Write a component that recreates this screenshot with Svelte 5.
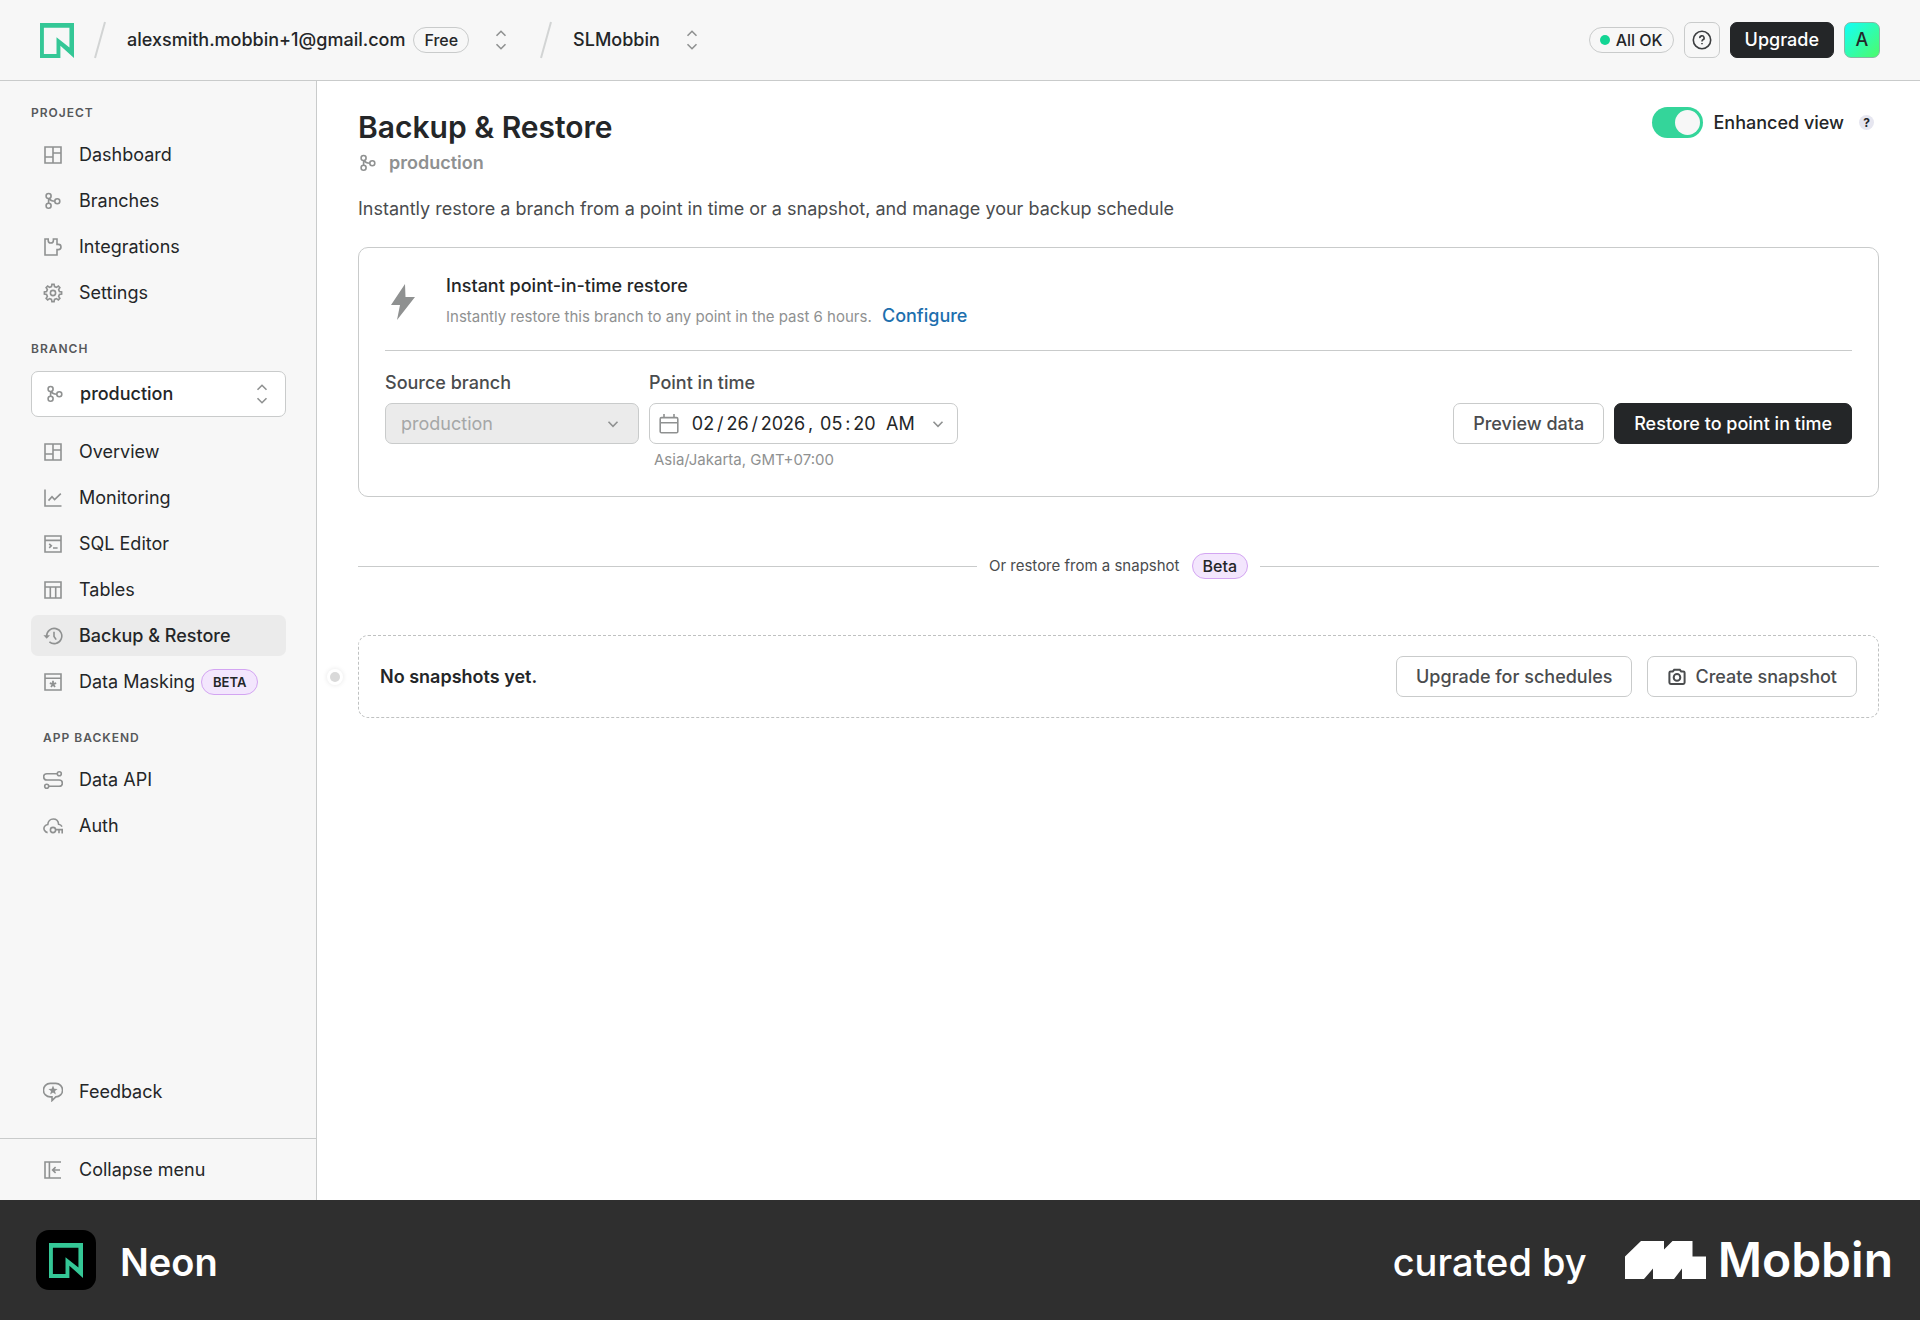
<script lang="ts">
	type NavItem = { label: string; icon: string; active?: boolean; badge?: string };

	const projectNav: NavItem[] = [
		{ label: 'Dashboard', icon: 'dashboard' },
		{ label: 'Branches', icon: 'branch' },
		{ label: 'Integrations', icon: 'puzzle' },
		{ label: 'Settings', icon: 'gear' }
	];

	const branchNav: NavItem[] = [
		{ label: 'Overview', icon: 'dashboard' },
		{ label: 'Monitoring', icon: 'chart' },
		{ label: 'SQL Editor', icon: 'terminal' },
		{ label: 'Tables', icon: 'table' },
		{ label: 'Backup & Restore', icon: 'history', active: true },
		{ label: 'Data Masking', icon: 'mask', badge: 'BETA' }
	];

	const backendNav: NavItem[] = [
		{ label: 'Data API', icon: 'api' },
		{ label: 'Auth', icon: 'auth' }
	];

	let enhanced = $state(true);
	let branch = $state('production');
	let date = $state({ month: '02', day: '26', year: '2026', hour: '05', minute: '20', period: 'AM' });

	// cog outline, one flat-topped tooth every 45 degrees
	function cog(teeth: number, outer: number, inner: number) {
		const points: string[] = [];
		const step = (Math.PI * 2) / teeth;
		for (let i = 0; i < teeth; i++) {
			const mid = i * step - Math.PI / 2;
			for (const [offset, r] of [
				[-0.3, inner],
				[-0.16, outer],
				[0.16, outer],
				[0.3, inner]
			]) {
				const a = mid + offset * step;
				points.push(`${(10 + r * Math.cos(a)).toFixed(2)} ${(10 + r * Math.sin(a)).toFixed(2)}`);
			}
		}
		return `M${points.join('L')}Z`;
	}

	const cogPath = cog(8, 8.7, 6.6);
</script>

<svelte:head>
	<title>Backup & Restore | Neon</title>
</svelte:head>

{#snippet icon(name: string)}
	<svg class="icon" viewBox="0 0 20 20" aria-hidden="true">
		{#if name === 'dashboard'}
			<path d="M2 2H18V18H2ZM10 2V18M2 12H10M10 8H18" />
		{:else if name === 'branch'}
			<circle cx="5.6" cy="5" r="2.5" />
			<circle cx="5.6" cy="14.8" r="2.5" />
			<circle cx="14.3" cy="10.2" r="2.5" />
			<path d="M5.6 7.5V12.3M6.4 7.4C7.1 9.3 8.8 10.2 11.8 10.2" />
		{:else if name === 'puzzle'}
			<path d="M2 2H5.2V3.4a2.6 2.6 0 0 0 5.2 0V2H14V7.4H15.4a2.6 2.6 0 0 1 0 5.2H14V18H2Z" />
		{:else if name === 'gear'}
			<path d={cogPath} />
			<circle cx="10" cy="10" r="2.6" />
		{:else if name === 'chart'}
			<path d="M2 1.5V18H18.5M5.5 12.6L9 8.8L11.6 11.6L17.8 5.6" />
		{:else if name === 'terminal'}
			<path d="M2 2H18V18H2ZM2 6.4H18M6.2 9.8L8.3 11.8L6.2 13.8M10 14H14.6" />
		{:else if name === 'table'}
			<path d="M2 2H18V18H2ZM2 7H18M7.3 7V18M12.7 7V18" />
		{:else if name === 'history'}
			<path d="M3.6 10A7.6 7.6 0 1 1 6.4 15.9M11 5.8V10.4L13.2 13.6" />
			<path class="solid" d="M0.4 9.2H7L3.7 12.8Z" />
		{:else if name === 'mask'}
			<path d="M2 2H18V18H2ZM2 6.2H18" />
			<path class="thick" d="M10 8.8V12.2M10 12.2L6.8 11.2M10 12.2L13.2 11.2M10 12.2L8 15M10 12.2L12 15" />
		{:else if name === 'api'}
			<circle cx="16.3" cy="3.7" r="2" />
			<circle cx="3.7" cy="16.3" r="2" />
			<path d="M14.3 3.7H3.8a3.15 3.15 0 0 0 0 6.3H16.2a3.15 3.15 0 0 1 0 6.3H5.7" />
		{:else if name === 'auth'}
			<path d="M4.6 16.6C1.6 16 0 12.8 1.6 10.4C2.4 9.2 3.6 8.6 4.8 8.5C5 5.2 7.3 3 10.2 3C13.2 3 15.3 5.2 15.6 8.2C17.2 8.4 18.3 9.2 19 10.6" />
			<circle cx="10" cy="14" r="2.6" />
			<path d="M12.6 13.6H19.2V17.6M16 13.6V17.2" />
		{:else if name === 'feedback'}
			<path d="M7.2 1.4H12.8A6.7 6.7 0 0 1 12.8 14.9L9 18.6V14.9H7.2A6.7 6.7 0 0 1 7.2 1.4Z" />
			<path class="solid" d="M10 3.6L11.3 6.8L14.6 7L12 9.1L12.8 12.4L10 10.6L7.2 12.4L8 9.1L5.4 7L8.7 6.8Z" />
		{:else if name === 'collapse'}
			<path d="M18 2H2V18H18M6.4 2V18M17 10H10M12.6 7.2L9.6 10L12.6 12.8" />
		{:else if name === 'updown'}
			<path d="M5.5 5.8L10 1.3L14.5 5.8M5.5 14.2L10 18.7L14.5 14.2" />
		{:else if name === 'down'}
			<path d="M5.5 7.8L10 12.3L14.5 7.8" />
		{:else if name === 'help'}
			<circle cx="10" cy="10" r="8.7" />
			<path d="M7.9 8.2A2.1 2.1 0 1 1 10.9 9.8Q10 10.3 10 11.4M10 13V14.2" />
		{:else if name === 'calendar'}
			<path d="M2.5 3.6H17.5Q18.8 3.6 18.8 4.9V17.5Q18.8 18.8 17.5 18.8H2.5Q1.2 18.8 1.2 17.5V4.9Q1.2 3.6 2.5 3.6ZM1.2 8.8H18.8M5 0V3.6M15 0V3.6" />
		{:else if name === 'camera'}
			<path d="M3.8 4.4H5.8L7.2 2.8H12.8L14.2 4.4H16.2Q17.6 4.4 17.6 5.8V15.6Q17.6 17 16.2 17H3.8Q2.4 17 2.4 15.6V5.8Q2.4 4.4 3.8 4.4Z" />
			<circle cx="10" cy="10.4" r="3.3" />
		{/if}
	</svg>
{/snippet}

{#snippet neonMark()}
	<svg class="neon-mark" viewBox="0 0 35 36" aria-hidden="true">
		<path fill-rule="evenodd" d="M0 0H35V36L21 23.3V36H0ZM4 5V32H17V14.7L30.3 25.3V5Z" />
	</svg>
{/snippet}

{#snippet slash()}
	<svg class="slash" viewBox="0 0 12 38" aria-hidden="true"><path d="M11 1L1 37" /></svg>
{/snippet}

{#snippet navList(items: NavItem[])}
	<ul class="nav-list">
		{#each items as item}
			<li>
				<a href="#{item.icon}" class="nav-item" class:active={item.active}>
					{@render icon(item.icon)}
					<span>{item.label}</span>
					{#if item.badge}
						<span class="badge beta small">{item.badge}</span>
					{/if}
				</a>
			</li>
		{/each}
	</ul>
{/snippet}

<div class="app">
	<header class="topbar">
		<a href="#home" class="logo" aria-label="Neon home">{@render neonMark()}</a>
		{@render slash()}
		<span class="crumb">alexsmith.mobbin+1@gmail.com</span>
		<span class="badge plan">Free</span>
		<button class="switcher" aria-label="Switch organization">{@render icon('updown')}</button>
		{@render slash()}
		<span class="crumb">SLMobbin</span>
		<button class="switcher project" aria-label="Switch project">{@render icon('updown')}</button>

		<div class="actions">
			<a href="#status" class="badge status"><i class="status-dot"></i>All OK</a>
			<button class="square" aria-label="Help">{@render icon('help')}</button>
			<button class="btn primary upgrade">Upgrade</button>
			<button class="square avatar">A</button>
		</div>
	</header>

	<div class="body">
		<aside class="sidebar">
			<nav class="nav">
				<h2 class="section-title">PROJECT</h2>
				{@render navList(projectNav)}

				<h2 class="section-title branch-title">BRANCH</h2>
				<div class="select branch-select">
					{@render icon('branch')}
					<select bind:value={branch} aria-label="Branch">
						<option>production</option>
					</select>
					{@render icon('updown')}
				</div>
				{@render navList(branchNav)}

				<h2 class="section-title backend-title">APP BACKEND</h2>
				{@render navList(backendNav)}

				<a href="#feedback" class="nav-item feedback">
					{@render icon('feedback')}
					<span>Feedback</span>
				</a>
			</nav>
			<div class="collapse">
				<button class="nav-item">
					{@render icon('collapse')}
					<span>Collapse menu</span>
				</button>
			</div>
		</aside>

		<main class="content">
			<div class="page-head">
				<div>
					<h1>Backup & Restore</h1>
					<p class="branch-name">{@render icon('branch')}production</p>
				</div>
				<div class="enhanced">
					<label>
						<input type="checkbox" role="switch" class="toggle" bind:checked={enhanced} />
						Enhanced view
					</label>
					<button class="hint" aria-label="About enhanced view">?</button>
				</div>
			</div>
			<p class="intro">
				Instantly restore a branch from a point in time or a snapshot, and manage your backup schedule
			</p>

			<section class="card">
				<div class="card-head">
					<svg class="bolt" viewBox="0 0 26 36" aria-hidden="true">
						<path d="M15 0L1 21H10L7 36L25 13H15.5Z" />
					</svg>
					<div>
						<h3>Instant point-in-time restore</h3>
						<p>
							Instantly restore this branch to any point in the past 6 hours.
							<a href="#configure">Configure</a>
						</p>
					</div>
				</div>

				<form class="restore" onsubmit={(e) => e.preventDefault()}>
					<div class="field source">
						<label for="source">Source branch</label>
						<div class="select source-select">
							<select id="source" disabled>
								<option>production</option>
							</select>
							{@render icon('down')}
						</div>
					</div>
					<div class="field">
						<label for="month">Point in time</label>
						<div class="date">
							{@render icon('calendar')}
							<div class="segments">
								<input id="month" bind:value={date.month} />
								<span>/</span>
								<input aria-label="Day" bind:value={date.day} />
								<span>/</span>
								<input class="year" aria-label="Year" bind:value={date.year} />
								<span class="comma">,</span>
								<input aria-label="Hour" bind:value={date.hour} />
								<span>:</span>
								<input aria-label="Minute" bind:value={date.minute} />
								<input class="period" aria-label="AM or PM" bind:value={date.period} />
							</div>
							{@render icon('down')}
						</div>
						<p class="zone">Asia/Jakarta, GMT+07:00</p>
					</div>
					<div class="buttons">
						<button class="btn">Preview data</button>
						<button class="btn primary">Restore to point in time</button>
					</div>
				</form>
			</section>

			<div class="separator">
				<span>Or restore from a snapshot</span>
				<span class="badge beta">Beta</span>
			</div>

			<section class="snapshots">
				<i class="marker"></i>
				<strong>No snapshots yet.</strong>
				<div class="snapshot-buttons">
					<button class="btn">Upgrade for schedules</button>
					<button class="btn">{@render icon('camera')}Create snapshot</button>
				</div>
			</section>
		</main>
	</div>

	<footer class="footer">
		<span class="app-icon">{@render neonMark()}</span>
		<span class="app-name">Neon</span>
		<span class="curated">curated by</span>
		<svg class="mobbin-mark" viewBox="0 0 81 38" aria-hidden="true">
			<path d="M16 0H39V8.4L47.5 0H67.5V15.6H81V38H57V27.6L49 38H28V27.6L19 38H0V15.6Z" />
		</svg>
		<span class="mobbin">Mobbin</span>
	</footer>
</div>

<style>
	:global(body) {
		margin: 0;
		background: #fff;
	}

	.app {
		display: flex;
		flex-direction: column;
		min-height: 100vh;
		font-family: Inter, 'Liberation Sans', sans-serif;
		font-size: 18px;
		line-height: 24px;
		color: #242628;
	}

	.app :is(h1, h2, h3, p, ul) {
		margin: 0;
		padding: 0;
	}

	button,
	input,
	select {
		margin: 0;
		padding: 0;
		border: 0;
		background: none;
		font: inherit;
		color: inherit;
	}

	a {
		color: inherit;
		text-decoration: none;
	}

	.icon {
		flex: none;
		width: 20px;
		height: 20px;
		fill: none;
		stroke: #8f9191;
		stroke-width: 1.6;
	}

	.icon .solid {
		fill: #8f9191;
		stroke: none;
	}

	.icon .thick {
		stroke-width: 1.8;
	}

	.badge {
		box-sizing: border-box;
		display: inline-flex;
		align-items: center;
		height: 26px;
		padding: 0 10px;
		border: 1px solid #c9cbcb;
		border-radius: 13px;
		font-size: 16px;
		font-weight: 500;
	}

	.badge.beta {
		border-color: #d3a5f2;
		background: #f3e6fd;
	}

	.badge.small {
		padding: 0 11px;
		font-size: 13px;
		font-weight: 600;
	}

	.btn {
		box-sizing: border-box;
		display: inline-flex;
		align-items: center;
		gap: 8px;
		height: 41px;
		padding: 0 19px;
		border: 1px solid #c9cbcb;
		border-radius: 7px;
		background: #fff;
		font-weight: 500;
		color: #4a4c4e;
		white-space: nowrap;
	}

	.btn.primary {
		border-color: #242628;
		background: #242628;
		color: #fff;
	}

	.btn .icon {
		stroke: #4a4c4e;
		stroke-width: 2;
	}

	/* top bar */

	.topbar {
		box-sizing: border-box;
		display: flex;
		align-items: center;
		height: 81px;
		padding: 0 40px;
		border-bottom: 1px solid #c9cbcb;
		background: #f7f7f7;
	}

	.neon-mark {
		display: block;
		width: 34px;
		height: 35px;
		fill: #34c796;
	}

	.slash {
		width: 12px;
		height: 38px;
		margin: 0 21px 0 20px;
		fill: none;
		stroke: #d2d4d4;
		stroke-width: 2;
	}

	.crumb {
		font-weight: 500;
	}

	.plan {
		margin: 0 13px 0 8px;
	}

	.switcher {
		display: flex;
		padding: 0 9px;
	}

	.project {
		margin-left: 13px;
	}

	.actions {
		display: flex;
		align-items: center;
		gap: 10px;
		margin-left: auto;
	}

	.status {
		gap: 6px;
	}

	.status-dot {
		width: 10px;
		height: 10px;
		border-radius: 50%;
		background: #12d594;
	}

	.square {
		box-sizing: border-box;
		display: flex;
		align-items: center;
		justify-content: center;
		width: 36px;
		height: 36px;
		border: 1px solid #c9cbcb;
		border-radius: 7px;
		font-weight: 500;
	}

	.square .icon {
		stroke: #3c3e40;
		stroke-width: 1.6;
	}

	.upgrade {
		height: 36px;
		padding: 0 14px;
	}

	.avatar {
		border-color: #86b8a5;
		background: linear-gradient(135deg, #12fff7, #4dfb6a);
	}

	/* sidebar */

	.body {
		display: flex;
		flex: 1;
	}

	.sidebar {
		box-sizing: border-box;
		display: flex;
		flex-direction: column;
		flex: none;
		width: 317px;
		border-right: 1px solid #c9cbcb;
		background: #f7f7f7;
	}

	.nav {
		display: flex;
		flex-direction: column;
		flex: 1;
		padding: 22px 30px 26px 31px;
	}

	.section-title {
		font-size: 12px;
		line-height: 20px;
		font-weight: 600;
		letter-spacing: 1px;
		color: #56585a;
	}

	.nav-list {
		display: flex;
		flex-direction: column;
		gap: 5px;
		list-style: none;
	}

	.app .nav-list {
		margin-top: 11px;
	}

	.nav-item {
		display: flex;
		align-items: center;
		gap: 16px;
		height: 41px;
		padding: 0 12px;
		border-radius: 7px;
	}

	.nav-item.active {
		background: #ebebeb;
		font-weight: 500;
	}

	.nav-item .badge {
		margin-left: -10px;
	}

	.app .branch-title {
		margin-top: 26px;
	}

	.app .backend-title {
		margin: 26px 0 0 12px;
	}

	/* the select fills the box, its icons share the same grid row */
	.select {
		display: grid;
		grid-template-columns: 1fr;
		align-items: center;
		box-sizing: border-box;
		border: 1px solid #c9cbcb;
		border-radius: 7px;
	}

	.select > :global(*) {
		grid-area: 1 / 1;
	}

	.select select {
		width: 100%;
		height: 100%;
		appearance: none;
	}

	.select .icon {
		pointer-events: none;
		justify-self: start;
	}

	.select select + .icon {
		justify-self: end;
	}

	.branch-select {
		height: 46px;
		margin: 12px 0 3px;
		padding: 0 13px;
		background: #fff;
	}

	.branch-select select {
		padding-left: 35px;
		font-weight: 500;
	}

	.feedback {
		margin-top: auto;
	}

	.collapse {
		padding: 10px 31px;
		border-top: 1px solid #c9cbcb;
	}

	/* main column */

	.content {
		flex: 1;
		min-width: 0;
		padding: 26px 41px;
	}

	.page-head {
		display: flex;
		justify-content: space-between;
		align-items: flex-start;
	}

	h1 {
		font-size: 30px;
		line-height: 40px;
		font-weight: 600;
	}

	.branch-name {
		display: flex;
		align-items: center;
		gap: 11px;
		height: 32px;
		font-weight: 600;
		color: #8f9191;
	}

	.enhanced,
	.enhanced label {
		display: flex;
		align-items: center;
		gap: 10px;
		font-weight: 500;
	}

	.enhanced {
		gap: 15px;
		padding-right: 5px;
	}

	.toggle {
		display: flex;
		width: 51px;
		height: 31px;
		box-sizing: border-box;
		padding: 3px;
		border-radius: 16px;
		background: #c9cbcb;
		appearance: none;
	}

	.toggle::before {
		content: '';
		width: 25px;
		height: 25px;
		border-radius: 50%;
		background: #f7f7f7;
	}

	.toggle:checked {
		justify-content: flex-end;
		background: #34d59a;
	}

	.hint {
		width: 15px;
		height: 15px;
		border-radius: 50%;
		background: #e6e6f0;
		font-size: 12px;
		line-height: 15px;
		font-weight: 700;
	}

	.app .intro {
		margin-top: 18px;
		color: #4a4c4e;
	}

	.card {
		margin-top: 26px;
		padding: 26px 26px 24px;
		border: 1px solid #c9cbcb;
		border-radius: 10px;
	}

	.card-head {
		display: flex;
		align-items: center;
		gap: 30px;
		padding: 0 5px 21px;
		border-bottom: 1px solid #c9cbcb;
	}

	.bolt {
		width: 26px;
		height: 36px;
		fill: #8f9191;
	}

	h3 {
		font-size: 18px;
		line-height: 24px;
		font-weight: 500;
	}

	.app .card-head p {
		margin-top: 6px;
		font-size: 15px;
		color: #8f9191;
	}

	.card-head a {
		margin-left: 6px;
		font-size: 18px;
		font-weight: 500;
		color: #1d6fae;
	}

	.restore {
		display: flex;
		gap: 10px;
		margin-top: 20px;
	}

	.field label {
		display: block;
		margin-bottom: 8px;
		font-weight: 500;
		color: #4a4c4e;
	}

	.source {
		width: 254px;
	}

	.source-select {
		height: 41px;
		padding: 0 15px;
		background: #ebebeb;
		color: #a5a7a7;
	}

	.source-select select {
		opacity: 1;
	}

	.date {
		box-sizing: border-box;
		display: flex;
		align-items: center;
		height: 41px;
		padding: 0 9px;
		border: 1px solid #c9cbcb;
		border-radius: 7px;
	}

	.segments {
		display: flex;
		align-items: center;
		gap: 2px;
		margin: 0 13px 0 12px;
	}

	.segments input {
		width: 24px;
		text-align: center;
	}

	.segments .year {
		width: 46px;
	}

	.segments .comma {
		margin-right: 4px;
	}

	.segments .period {
		width: 30px;
		margin-left: 7px;
	}

	.app .zone {
		padding: 4px 5px 0;
		font-size: 15px;
		color: #8f9191;
	}

	.buttons {
		display: flex;
		gap: 10px;
		margin: 32px 0 0 auto;
	}

	.separator {
		display: flex;
		align-items: center;
		gap: 12px;
		margin: 56px 0;
		font-size: 15px;
		color: #4a4c4e;
	}

	.separator::before,
	.separator::after {
		content: '';
		flex: 1;
		border-top: 1px solid #c9cbcb;
	}

	.separator .badge {
		color: #242628;
	}

	.snapshots {
		position: relative;
		display: flex;
		align-items: center;
		padding: 20px 21px;
		border: 1px dashed #bfc1c1;
		border-radius: 10px;
	}

	.snapshots strong {
		font-weight: 600;
	}

	.snapshot-buttons {
		display: flex;
		gap: 15px;
		margin-left: auto;
	}

	/* timeline dot in the page gutter */
	.marker {
		position: absolute;
		left: -29px;
		width: 10px;
		height: 10px;
		border-radius: 50%;
		background: #d9d9d9;
		box-shadow:
			0 0 0 3px #fff,
			0 0 4px 4px #eee;
	}

	/* bottom banner */

	.footer {
		display: flex;
		align-items: center;
		height: 120px;
		padding: 0 27px 0 36px;
		background: #2f2f2f;
		font-size: 38px;
		line-height: 48px;
		font-weight: 600;
		color: #fff;
	}

	.app-icon {
		display: flex;
		align-items: center;
		justify-content: center;
		width: 60px;
		height: 60px;
		border-radius: 13px;
		background: #000;
	}

	.app-name,
	.curated {
		padding-top: 3px;
	}

	.app-name {
		margin-left: 24px;
	}

	.curated {
		margin-left: auto;
		font-weight: 500;
	}

	.mobbin-mark {
		width: 81px;
		height: 38px;
		margin: 0 12px 0 38px;
		fill: #fff;
	}

	.mobbin {
		font-size: 48px;
	}
</style>
